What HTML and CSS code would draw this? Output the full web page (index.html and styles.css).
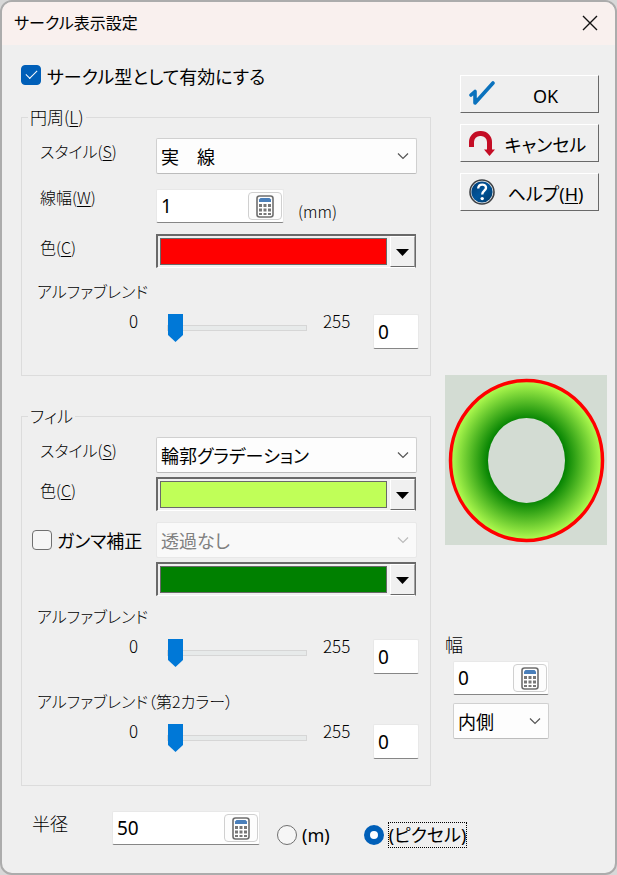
FILE: index.html
```html
<!DOCTYPE html>
<html lang="ja">
<head>
<meta charset="utf-8">
<meta name="viewport" content="width=device-width, initial-scale=1">
<title>サークル表示設定</title>
<link rel="stylesheet" href="styles.css">
</head>
<body>
<svg class="defs" aria-hidden="true">
  <symbol id="calc" viewBox="0 0 18 23">
    <rect x="1" y="1" width="16" height="21" rx="2.500" fill="#fff" stroke="#6d6d6d" stroke-width="1.600"/>
    <path d="M3 7V4.500L4.500 3h9L15 4.500V7z" fill="#4a7fba"/>
    <path d="M3 9h3v3H3zM7.500 9h3v3h-3zM12 9h3v3h-3zM3 13.500h3v3H3zM7.500 13.500h3v3h-3zM12 13.500h3v3h-3zM3 18h3v2H3zM7.500 18h3v2h-3zM12 18h3v2h-3z" fill="#777"/>
  </symbol>
  <symbol id="chevron" viewBox="0 0 12 8">
    <path d="M1 1.500l5 5 5-5" fill="none" stroke="currentColor" stroke-width="1.200"/>
  </symbol>
  <symbol id="arrow" viewBox="0 0 13 7"><path d="M0 0h13L6.500 7z"/></symbol>
</svg>
<form class="dialog">
  <header class="titlebar">
    <h1>サークル表示設定</h1>
    <button class="close" type="button" aria-label="閉じる">
      <svg viewBox="0 0 16 16"><path d="M1 1l14 14M15 1L1 15" stroke="#111" stroke-width="1.400"/></svg>
    </button>
  </header>
  <div class="content">
    <main class="settings">
      <label class="check enable"><input type="checkbox" checked><span>サークル型として有効にする</span></label>

      <fieldset class="group">
        <legend>円周(<u>L</u>)</legend>
        <div class="field">
          <label for="line-style">スタイル(<u>S</u>)</label>
          <span class="select"><select id="line-style"><option>実　線</option></select><svg><use href="#chevron"/></svg></span>
        </div>
        <div class="field wide">
          <label for="line-width">線幅(<u>W</u>)</label>
          <div class="measure">
            <span class="number"><input id="line-width" type="text" value="1"><button type="button" aria-label="電卓"><svg><use href="#calc"/></svg></button></span>
            <span class="unit">(mm)</span>
          </div>
        </div>
        <div class="field medium">
          <label for="line-color">色(<u>C</u>)</label>
          <button class="color" id="line-color" type="button"><span class="swatch red"></span><span class="drop"><svg><use href="#arrow"/></svg></span></button>
        </div>
        <label class="caption" for="line-alpha">アルファブレンド</label>
        <div class="alpha">
          <span class="min">0</span><input id="line-alpha" type="range" min="0" max="255" value="0"><span>255</span><input class="value" type="text" value="0" aria-label="アルファ値">
        </div>
      </fieldset>

      <fieldset class="group fill">
        <legend>フィル</legend>
        <div class="field">
          <label for="fill-style">スタイル(<u>S</u>)</label>
          <span class="select"><select id="fill-style"><option>輪郭グラデーション</option></select><svg><use href="#chevron"/></svg></span>
        </div>
        <div class="field tight">
          <label for="fill-color">色(<u>C</u>)</label>
          <button class="color" id="fill-color" type="button"><span class="swatch lime"></span><span class="drop"><svg><use href="#arrow"/></svg></span></button>
        </div>
        <div class="field medium">
          <label class="check gamma"><input type="checkbox"><span>ガンマ補正</span></label>
          <span class="select disabled"><select disabled aria-label="透過"><option>透過なし</option></select><svg><use href="#chevron"/></svg></span>
        </div>
        <div class="field tight">
          <span></span>
          <button class="color" type="button" aria-label="第2カラー"><span class="swatch green"></span><span class="drop"><svg><use href="#arrow"/></svg></span></button>
        </div>
        <label class="caption near" for="fill-alpha">アルファブレンド</label>
        <div class="alpha">
          <span class="min">0</span><input id="fill-alpha" type="range" min="0" max="255" value="0"><span>255</span><input class="value" type="text" value="0" aria-label="アルファ値">
        </div>
        <label class="caption far" for="second-alpha">アルファブレンド（第2カラー）</label>
        <div class="alpha">
          <span class="min">0</span><input id="second-alpha" type="range" min="0" max="255" value="0"><span>255</span><input class="value" type="text" value="0" aria-label="アルファ値">
        </div>
      </fieldset>

      <div class="radius">
        <label for="radius">半径</label>
        <span class="number"><input id="radius" type="text" value="50"><button type="button" aria-label="電卓"><svg><use href="#calc"/></svg></button></span>
        <label class="radio"><input type="radio" name="unit"><span>(m)</span></label>
        <label class="radio pixel"><input type="radio" name="unit" checked><span class="focused">(ピクセル)</span></label>
      </div>
    </main>

    <aside class="side">
      <div class="actions">
        <button type="submit">
          <svg viewBox="0 0 26 26"><path d="M2 14l4-3.500V22L24 2" fill="none" stroke="#0b72bd" stroke-width="3.600" stroke-linecap="round" stroke-linejoin="round"/></svg>
          <span>OK</span>
        </button>
        <button type="button">
          <svg viewBox="0 0 26 26"><path d="M2.500 17V12a8.500 8.500 0 0 1 8.500-8.500h1a8.500 8.500 0 0 1 8.500 8.500v8" fill="none" stroke="#c40d25" stroke-width="5"/><path d="M15 19.500h11L20.500 26z" fill="#c40d25"/></svg>
          <span>キャンセル</span>
        </button>
        <button type="button">
          <svg viewBox="0 0 26 26"><defs><linearGradient id="ball" x1="0" y1="0" x2="1" y2="1"><stop offset="0" stop-color="#003a70"/><stop offset=".5" stop-color="#00559b"/><stop offset="1" stop-color="#003866"/></linearGradient></defs><circle cx="13" cy="13" r="12" fill="#eee" stroke="#3d4044" stroke-width="1.600"/><circle cx="13" cy="13" r="10.600" fill="url(#ball)"/><path d="M9.200 9.500c.2-5.200 8-5 7.800-.6-.1 2.800-3.700 2.900-3.800 6.600" fill="none" stroke="#fff" stroke-width="2.400"/><circle cx="13.200" cy="19.600" r="1.700" fill="#fff"/></svg>
          <span>ヘルプ(<u>H</u>)</span>
        </button>
      </div>
      <svg class="preview" viewBox="0 0 162 170" role="img" aria-label="プレビュー">
        <defs><radialGradient id="ring"><stop offset=".5" stop-color="#008000"/><stop offset="1" stop-color="#b6ff52"/></radialGradient></defs>
        <rect width="162" height="170" fill="#d3dcd3"/>
        <ellipse cx="81.500" cy="85.500" rx="76" ry="80" fill="url(#ring)" stroke="#f00" stroke-width="3.500"/>
        <ellipse cx="81.500" cy="85.500" rx="38.500" ry="42.500" fill="#d3dcd3"/>
      </svg>
      <label class="width-label" for="ring-width">幅</label>
      <div class="width">
        <span class="number"><input id="ring-width" type="text" value="0"><button type="button" aria-label="電卓"><svg><use href="#calc"/></svg></button></span>
        <span class="select"><select aria-label="位置"><option>内側</option></select><svg><use href="#chevron"/></svg></span>
      </div>
    </aside>
  </div>
</form>
</body>
</html>
```

FILE: styles.css
```css
* { box-sizing: border-box; }

body {
  margin: 0;
  background: #d8d8d8;
  color: #000;
  font-family: "Noto Sans", "Noto Sans CJK JP", sans-serif;
  font-size: 18px;
  line-height: 24px;
  font-feature-settings: "palt";
}

input, select, button { font: inherit; color: inherit; font-feature-settings: inherit; margin: 0; }
button { padding: 0; background: none; border: 0; }
u { text-underline-offset: 2px; text-decoration-thickness: 1px; }
.defs { display: none; }

.dialog {
  min-height: 100vh;
  border: 2px solid #acacac;
  border-radius: 12px;
  background: #efefef;
  overflow: hidden;
}

.titlebar {
  display: flex;
  align-items: center;
  justify-content: space-between;
  height: 43px;
  padding: 0 17px 2px 12px;
  background: #f9f0ee;
}
.titlebar h1 { margin: 0; font-size: 16px; font-weight: 400; }
.close { display: flex; }
.close svg { width: 16px; height: 16px; }

.content {
  display: grid;
  grid-template-columns: minmax(0, 1fr) 162px;
  column-gap: 14px;
  padding: 20px 8px 0 19px;
}

.check { display: flex; align-items: flex-start; }
.enable { height: 42px; gap: 6px; }

input[type="checkbox"], input[type="radio"] {
  appearance: none;
  flex: none;
  width: 20px;
  height: 20px;
  border: 1px solid #707070;
  border-radius: 4px;
  background: #f6f6f6;
}
input[type="radio"] { border-radius: 50%; }
input[type="checkbox"]:checked {
  display: grid;
  place-items: center;
  border-color: #005fb8;
  background: #005fb8;
}
input[type="checkbox"]:checked::after {
  content: "";
  width: 10px;
  height: 5px;
  margin-bottom: 4px;
  border: solid #fff;
  border-width: 0 0 1px 1px;
  rotate: -45deg;
}
input[type="radio"]:checked { border: 6px solid #005fb8; background: #fff; }

.group {
  min-width: 0;
  margin: 0;
  padding: 11px 11px 26px 18px;
  border: 1px solid #dcdcdc;
}
.group legend { margin-left: -12px; padding: 0 2px; line-height: 20px; }
.group legend, .field > label, .caption, .unit, .alpha span, .radius > label:first-child, .width-label {
  font-family: "Noto Sans CJK JP", sans-serif;
  font-size: 16px;
  font-weight: 300;
}
.group legend, .radius > label:first-child, .width-label { font-size: 18px; }
.group legend { font-size: 17px; }
.fill { margin-top: 30px; }

.field {
  display: grid;
  grid-template-columns: 116px 1fr;
  align-items: start;
  padding-right: 2px;
}
.field > label { line-height: 26px; }
.tight { margin-top: 4px; }
.medium { margin-top: 11px; }
.wide { margin-top: 15px; }
.wide > label { line-height: 16px; }

.field > .gamma {
  align-self: center;
  align-items: center;
  gap: 5px;
  margin-left: -8px;
  font-size: 18px;
  font-weight: 400;
  white-space: nowrap;
}

.select { display: grid; height: 36px; align-items: center; }
.select > * { grid-area: 1 / 1; }
.select select {
  appearance: none;
  width: 100%;
  height: 36px;
  padding: 2px 4px 0;
  border: 1px solid #d0d0d0;
  border-bottom-color: #bcbcbc;
  border-radius: 2px;
  background: #fdfdfd;
}
.select svg {
  justify-self: end;
  width: 12px;
  height: 8px;
  margin-right: 8px;
  color: #555;
  pointer-events: none;
}
.select.disabled select { border-color: #e8e8e8; background: #f9f9f9; color: #808080; opacity: 1; }
.select.disabled svg { color: #bbb; }

.measure { display: flex; align-items: flex-start; gap: 14px; }
.measure .number { width: 128px; }
.unit { margin-top: 10px; }

.number {
  display: flex;
  align-items: center;
  height: 34px;
  border: 1px solid #e8e8e8;
  border-bottom-color: #868686;
  border-radius: 2px;
  background: #fff;
}
.number input, .value { font-size: 19px; }
.number input { flex: 1; width: 0; min-width: 0; height: 32px; padding: 0 4px; border: 0; background: none; }
.number button {
  display: grid;
  place-items: center;
  width: 34px;
  height: 28px;
  margin-right: 1px;
  border: 1px solid #d0d0d0;
  border-radius: 4px;
  background: #fdfdfd;
}
.number svg { width: 18px; height: 23px; }

.color {
  display: flex;
  height: 34px;
  margin-right: 1px;
  border: solid;
  border-width: 2px 1px 1px 2px;
  border-color: #696969 #696969 #fff #696969;
  background: #f0f0f0;
}
.swatch { flex: 1; margin: 2px 3px 2px 2px; border: 1px solid #696969; }
.red { background: #f00; }
.lime { background: #c0ff58; }
.green { background: #008000; }
.drop {
  display: grid;
  place-items: center;
  width: 25px;
  border: solid;
  border-width: 1px;
  border-color: #fff #a0a0a0 #696969 #fff;
}
.drop svg { width: 13px; height: 7px; margin-top: 2px; }

.caption { display: block; margin: 13px 0 13px -3px; line-height: 20px; }
.near { margin-top: 10px; }
.far { margin-top: 17px; }

.alpha {
  display: grid;
  grid-template-columns: 98px 153px 28px 1fr;
  column-gap: 16px;
  align-items: start;
}
.alpha span { line-height: 14px; font-size: 17px; }
.alpha .min { text-align: right; }
.alpha input[type="range"] { margin-left: 13px; }
input[type="range"] { appearance: none; width: 140px; height: 28px; background: none; }
input[type="range"]::-webkit-slider-runnable-track {
  height: 6px;
  border: 1px solid #d6d6d6;
  background: #e7eaea;
}
input[type="range"]::-webkit-slider-thumb {
  appearance: none;
  width: 15px;
  height: 28px;
  margin-top: -12px;
  background: #0078d7;
  clip-path: polygon(0 0, 100% 0, 100% 75%, 50% 100%, 0 75%);
}
.value {
  justify-self: end;
  width: 46px;
  height: 35px;
  padding: 0 4px;
  border: 1px solid #e8e8e8;
  border-bottom-color: #868686;
  border-radius: 2px;
  background: #fff;
}

.radius { display: flex; align-items: flex-start; margin-top: 25px; padding-left: 11px; }
.radius > * { flex: none; }
.radius > label:first-child { width: 80px; line-height: 24px; }
.radius .number { width: 148px; height: 34px; margin-right: 17px; }
.radio { display: flex; align-items: center; gap: 5px; margin-top: 12px; white-space: nowrap; }
.pixel { margin-left: 34px; }
.focused { outline: 1px dotted #000; }

.actions { display: grid; gap: 11px; padding: 10px 8px 0 15px; }
.actions button {
  display: grid;
  grid-template-columns: 26px 1fr;
  column-gap: 8px;
  align-items: center;
  height: 38px;
  padding: 0 10px 0 8px;
  border: solid;
  border-width: 1px;
  border-color: #fff #696969 #696969 #fff;
  white-space: nowrap;
}
.actions svg { width: 26px; height: 26px; }
.actions span { padding-top: 3px; }
.preview { display: block; width: 162px; height: 170px; margin-top: 164px; }
.width-label { display: block; margin-top: 87px; }
.width { display: grid; gap: 8px; width: 96px; margin: 5px 0 0 8px; }
```
